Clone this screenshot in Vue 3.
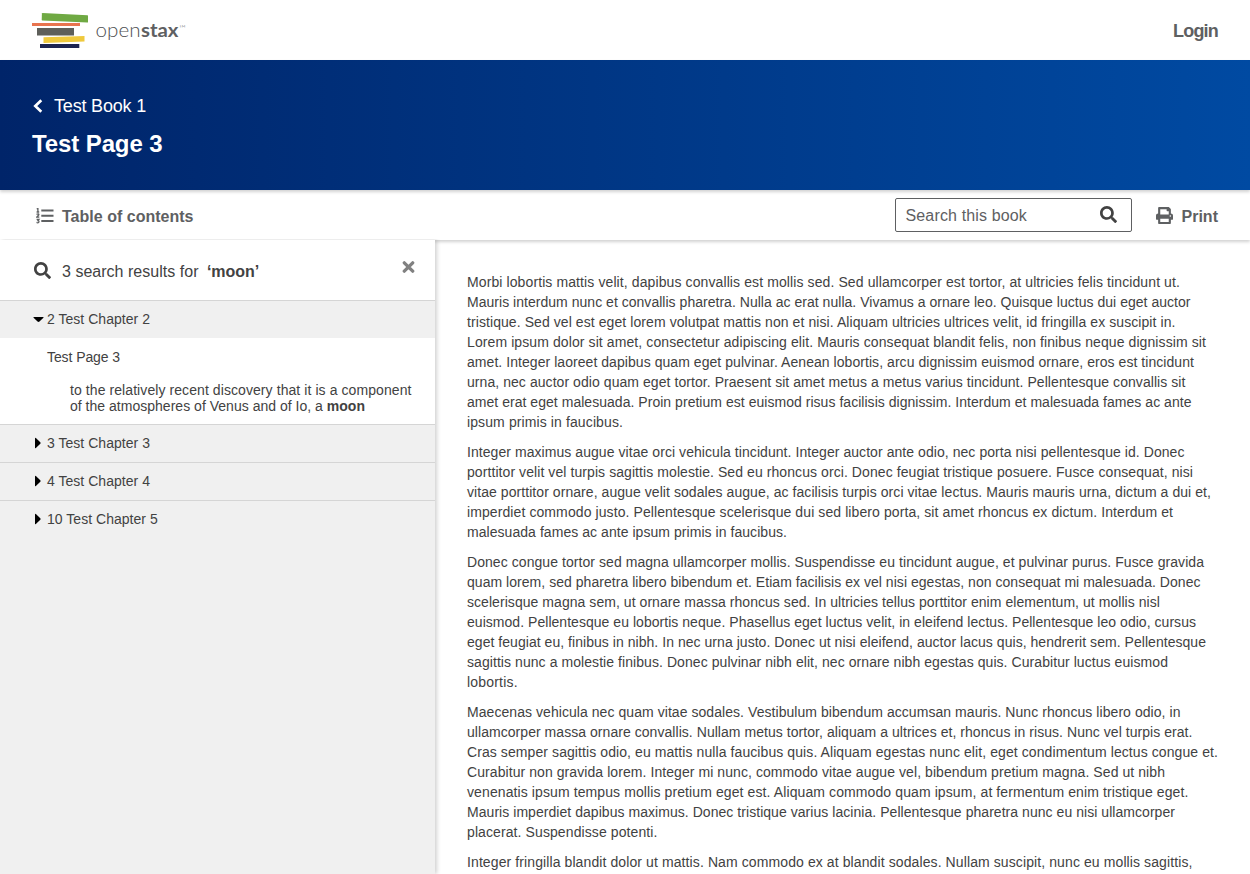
<script setup>
const chapters = [
  { title: '2 Test Chapter 2', width: 103, open: true },
  { title: '3 Test Chapter 3', width: 103 },
  { title: '4 Test Chapter 4', width: 103 },
  { title: '10 Test Chapter 5', width: 110.8 },
]
const paragraphs = [
  [
    ['Morbi lobortis mattis velit, dapibus convallis est mollis sed. Sed ullamcorper est tortor, at ultricies felis tincidunt ut.', 713],
    ['Mauris interdum nunc et convallis pharetra. Nulla ac erat nulla. Vivamus a ornare leo. Quisque luctus dui eget auctor', 723.5],
    ['tristique. Sed vel est eget lorem volutpat mattis non et nisi. Aliquam ultricies ultrices velit, id fringilla ex suscipit in.', 708.5],
    ['Lorem ipsum dolor sit amet, consectetur adipiscing elit. Mauris consequat blandit felis, non finibus neque dignissim sit', 739],
    ['amet. Integer laoreet dapibus quam eget pulvinar. Aenean lobortis, arcu dignissim euismod ornare, eros est tincidunt', 727],
    ['urna, nec auctor odio quam eget tortor. Praesent sit amet metus a metus varius tincidunt. Pellentesque convallis sit', 718.5],
    ['amet erat eget malesuada. Proin pretium est euismod risus facilisis dignissim. Interdum et malesuada fames ac ante', 724.5],
    ['ipsum primis in faucibus.', 156],
  ],
  [
    ['Integer maximus augue vitae orci vehicula tincidunt. Integer auctor ante odio, nec porta nisi pellentesque id. Donec', 717.5],
    ['porttitor velit vel turpis sagittis molestie. Sed eu rhoncus orci. Donec feugiat tristique posuere. Fusce consequat, nisi', 726],
    ['vitae porttitor ornare, augue velit sodales augue, ac facilisis turpis orci vitae lectus. Mauris mauris urna, dictum a dui et,', 744],
    ['imperdiet commodo justo. Pellentesque scelerisque dui sed libero porta, sit amet rhoncus ex dictum. Interdum et', 706],
    ['malesuada fames ac ante ipsum primis in faucibus.', 320],
  ],
  [
    ['Donec congue tortor sed magna ullamcorper mollis. Suspendisse eu tincidunt augue, et pulvinar purus. Fusce gravida', 737],
    ['quam lorem, sed pharetra libero bibendum et. Etiam facilisis ex vel nisi egestas, non consequat mi malesuada. Donec', 733.5],
    ['scelerisque magna sem, ut ornare massa rhoncus sed. In ultricies tellus porttitor enim elementum, ut mollis nisl', 693],
    ['euismod. Pellentesque eu lobortis neque. Phasellus eget luctus velit, in eleifend lectus. Pellentesque leo odio, cursus', 729],
    ['eget feugiat eu, finibus in nibh. In nec urna justo. Donec ut nisi eleifend, auctor lacus quis, hendrerit sem. Pellentesque', 739],
    ['sagittis nunc a molestie finibus. Donec pulvinar nibh elit, nec ornare nibh egestas quis. Curabitur luctus euismod', 701],
    ['lobortis.', 50.8],
  ],
  [
    ['Maecenas vehicula nec quam vitae sodales. Vestibulum bibendum accumsan mauris. Nunc rhoncus libero odio, in', 713.5],
    ['ullamcorper massa ornare convallis. Nullam metus tortor, aliquam a ultrices et, rhoncus in risus. Nunc vel turpis erat.', 725.5],
    ['Cras semper sagittis odio, eu mattis nulla faucibus quis. Aliquam egestas nunc elit, eget condimentum lectus congue et.', 751],
    ['Curabitur non gravida lorem. Integer mi nunc, commodo vitae augue vel, bibendum pretium magna. Sed ut nibh', 698],
    ['venenatis ipsum tempus mollis pretium eget est. Aliquam commodo quam ipsum, at fermentum enim tristique eget.', 721.5],
    ['Mauris imperdiet dapibus maximus. Donec tristique varius lacinia. Pellentesque pharetra nunc eu nisi ullamcorper', 708],
    ['placerat. Suspendisse potenti.', 190.5],
  ],
  [['Integer fringilla blandit dolor ut mattis. Nam commodo ex at blandit sodales. Nullam suscipit, nunc eu mollis sagittis,', 725.5]],
]
const searchPath =
  'M505 442.7L405.3 343c-4.5-4.500-10.600-7-17-7H372c27.600-35.300 44-79.700 44-128C416 93.100 322.900 0 208 0S0 93.100 0 208s93.100 208 208 208c48.300 0 92.700-16.400 128-44v16.300c0 6.400 2.500 12.500 7 17l99.700 99.700c9.400 9.400 24.600 9.400 33.900 0l28.300-28.300c9.400-9.400 9.400-24.600.1-34zM208 336c-70.700 0-128-57.200-128-128 0-70.700 57.200-128 128-128 70.700 0 128 57.200 128 128 0 70.700-57.200 128-128 128z'

// Tracks a single-line text so that it sets to the given measure.
const vFit = {
  mounted(el, { value }) {
    const natural = el.getBoundingClientRect().width
    el.style.letterSpacing = `${(value - natural) / el.textContent.length}px`
  },
}
</script>

<template>
  <div class="page">
    <header class="nav">
      <svg class="logo" width="156" height="40" viewBox="0 0 156 40">
        <path d="M10.500 3L55.500 5.200Q56 5.300 56 6V12Q56 12.500 55.400 12.500L10.200 10.500Q9.700 10.400 9.700 9.800L9.900 3.500Q10 3 10.500 3Z" fill="#6fa943" />
        <path d="M0 13H48V16H0Z" fill="#e8744f" />
        <path d="M5 18H42V25.500H5Z" fill="#5e5f5a" />
        <path d="M11.500 27.200L52.500 26V31.500L11.500 33Z" fill="#efc93d" />
        <path d="M8 34H47.300V38H8Z" fill="#1c2450" />
        <text class="brand" x="63.500" y="27" textLength="45" lengthAdjust="spacingAndGlyphs">open</text>
        <text class="brand strong" x="109" y="27" textLength="37.500" lengthAdjust="spacingAndGlyphs">stax</text>
        <text class="brand tm" x="147" y="21" textLength="7" lengthAdjust="spacingAndGlyphs">™</text>
      </svg>
      <a class="login"><span v-fit="45">Login</span></a>
    </header>

    <section class="banner">
      <a class="book">
        <svg width="10" height="14" viewBox="0 0 10 14"><path d="M8.300 1.200L2.300 7l6 5.800" fill="none" stroke="#fff" stroke-width="2.700" /></svg>
        <span v-fit="92">Test Book 1</span>
      </a>
      <h1><span v-fit="130.500">Test Page 3</span></h1>
    </section>

    <nav class="toolbar">
      <a class="toc">
        <svg width="18" height="16" viewBox="0 0 18 16">
          <path d="M5.300 2.500H17.500M5.300 7.700H17.500M5.300 13H17.500" stroke="#5e6062" stroke-width="2" />
          <path d="M.7 1L1.900.5V4M.6 4H3.200M.5 6.300Q3 5.300 2.900 6.800L.7 9.200H3.300M.6 11.400H2.900L1.900 12.600Q3.300 12.700 2.800 14.200Q2 15.200.5 14.500" fill="none" stroke="#5e6062" stroke-width="1.300" />
        </svg>
        <span v-fit="131.500">Table of contents</span>
      </a>
      <div class="search">
        <span v-fit="121.500">Search this book</span>
        <svg width="17" height="17" viewBox="0 0 512 512"><path :d="searchPath" fill="#424242" /></svg>
      </div>
      <a class="print">
        <svg width="17" height="17" viewBox="0 0 512 512">
          <path fill="#5e6062" fill-rule="evenodd" d="M448 192V77.300c0-8.500-3.400-16.600-9.400-22.600L393.400 9.400c-6-6-14.100-9.400-22.600-9.400H96C78.300 0 64 14.300 64 32v160c-35.300 0-64 28.700-64 64v112c0 8.800 7.200 16 16 16h48v96c0 17.700 14.300 32 32 32h320c17.700 0 32-14.300 32-32v-96h48c8.800 0 16-7.200 16-16V256c0-35.300-28.700-64-64-64zM384 448H128v-96h256v96zm0-224H128V64h192v48c0 8.800 7.200 16 16 16h48v96zm48 72c-13.300 0-24-10.700-24-24s10.700-24 24-24 24 10.700 24 24-10.700 24-24 24z" />
        </svg>
        <span v-fit="36.500">Print</span>
      </a>
    </nav>

    <div class="body">
      <aside class="sidebar">
        <div class="results">
          <svg width="17" height="17" viewBox="0 0 512 512"><path :d="searchPath" fill="#424242" /></svg>
          <span v-fit="136.500" class="count">3 search results for</span>
          <strong v-fit="52">‘moon’</strong>
          <svg class="close" width="13" height="12" viewBox="0 0 13 12"><path d="M2.300 1.800L10.700 10.200M10.700 1.800L2.300 10.200" stroke="#818181" stroke-width="3.300" stroke-linecap="round" /></svg>
        </div>
        <section v-for="c in chapters" :key="c.title" class="chapter">
          <div class="chapter-head">
            <svg width="11" height="12" viewBox="0 0 11 12">
              <path v-if="c.open" d="M.7 4H10.300Q11 4.200 10.200 5L6.500 8.600Q5.500 9.400 4.500 8.600L.8 5Q0 4.200.7 4Z" />
              <path v-else d="M2 1.200Q2 .5 2.900 1L7.300 5.200Q8 6 7.300 6.800L2.900 11Q2 11.500 2 10.700Z" />
            </svg>
            <span v-fit="c.width">{{ c.title }}</span>
          </div>
          <div v-if="c.open" class="hits">
            <div><span v-fit="73">Test Page 3</span></div>
            <div class="hit">
              <div><span v-fit="341.500">to the relatively recent discovery that it is a component</span></div>
              <div><span v-fit="295">of the atmospheres of Venus and of Io, a <b>moon</b></span></div>
            </div>
          </div>
        </section>
      </aside>
      <main class="content">
        <p v-for="(lines, i) in paragraphs" :key="i">
          <template v-for="[text, width] in lines" :key="text"><span v-fit="width">{{ text }}</span><br></template>
        </p>
      </main>
    </div>
  </div>
</template>

<style>
body { background: #fff; overflow: hidden; }
</style>
<style scoped>
* { box-sizing: border-box; }
.page { height: 874px; overflow: hidden; display: flex; flex-direction: column; font-family: "Liberation Sans", Arial, sans-serif; color: #424242; background: #fff; }
span, strong { white-space: nowrap; }
.nav { height: 60px; flex: none; padding: 0 32px; display: flex; align-items: center; justify-content: space-between; }
.brand { font-family: Lato, sans-serif; font-size: 19px; font-weight: 300; fill: #4e5052; }
.brand.strong { font-weight: 700; fill: #5e6062; }
.brand.tm { font-size: 8px; }
.login { font-size: 18px; font-weight: 700; color: #5e6062; padding-top: 2px; }
.banner { height: 130px; flex: none; padding: 33px 32px 0; background: linear-gradient(to right, #002469, #004aa2); color: #fff; position: relative; z-index: 3; box-shadow: 0 2px 3px rgba(0,0,0,.18); }
.book { display: flex; align-items: center; gap: 11px; height: 26px; padding-left: 1px; font-size: 18px; }
h1 { margin: 8px 0 0; font-size: 24px; line-height: 34px; font-weight: 700; }
.toolbar { height: 50px; flex: none; padding: 0 32px 0 36px; display: flex; align-items: center; background: #fff; color: #5e6062; font-size: 16px; position: relative; z-index: 2; box-shadow: 0 2px 3px rgba(0,0,0,.18); }
.toc, .print { display: flex; align-items: center; font-weight: 700; }
.toc span, .print span { padding-top: 3px; }
.toc { gap: 8px; flex: 1; }
.toc svg { margin-top: 2px; }
.print { gap: 9px; }
.search { width: 237px; height: 34px; margin-right: 24px; padding: 0 14px 0 10px; border: 1px solid #5e6062; border-radius: 2px; display: flex; align-items: center; justify-content: space-between; }
.search span { padding-top: 2px; }
.search svg { margin-bottom: 1px; }
.body { flex: 1; min-height: 0; display: flex; }
.sidebar { width: 435px; flex: none; background: #f0f0f0; position: relative; z-index: 2; box-shadow: 2px 0 4px rgba(0,0,0,.18); clip-path: inset(-1px -6px 0 0); }
.results { height: 60px; padding: 2px 20px 0 34px; display: flex; align-items: center; background: #fff; font-size: 16px; }
.results > svg:first-child { margin-bottom: 1px; }
.results span, .results strong { padding-top: 2px; }
.count { margin: 0 8.500px 0 11px; }
.results .close { margin-left: auto; margin-bottom: 8px; }
.chapter { border-top: 1px solid #d5d5d5; font-size: 14px; }
.chapter-head { height: 37px; padding: 0 0 2px 33px; display: flex; align-items: center; gap: 3px; }
.chapter-head svg { margin-top: 1px; }
.hits { height: 86px; background: #fff; padding: 11px 0 0 47px; line-height: 16px; }
.hit { margin-top: 17px; padding-left: 23px; }
.content { flex: 1; padding: 32px 32px 0; overflow: hidden; font-size: 14px; line-height: 20px; white-space: nowrap; }
p { margin: 0 0 10px; }
</style>
